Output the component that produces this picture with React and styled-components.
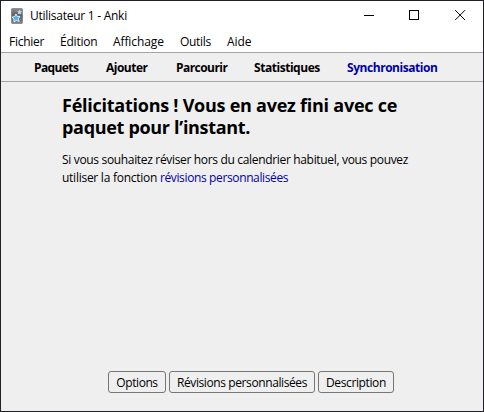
import React from "react";
import styled, { createGlobalStyle } from "styled-components";

const Global = createGlobalStyle`
  * { box-sizing: border-box; }
  body { margin: 0; background: #231f26; font-family: "Open Sans", "Noto Sans", sans-serif; font-size: 12px; color: #000; overflow: hidden; }
`;

const Window = styled.div`
  width: 484px;
  height: 412px;
  border: 1px solid #231f26;
  background: #efefef;
  display: flex;
  flex-direction: column;
`;

const TitleBar = styled.header`
  height: 30px;
  flex: none;
  background: #fff;
  display: flex;
  align-items: center;
  padding-left: 10px;
`;

const Title = styled.span`
  margin-left: 7px;
  line-height: 16px;
  letter-spacing: -0.26px;
  flex: 1;
`;

const Controls = styled.div`
  display: flex;
  height: 30px;
`;

const Control = styled.span`
  width: 46px;
  height: 30px;
  display: block;
`;

const MenuBar = styled.nav`
  height: 21px;
  flex: none;
  background: #fff;
  display: flex;
  padding-left: 8px;
  line-height: 22px;
`;

const MenuItem = styled.span`
  width: ${(p) => p.$width}px;
  letter-spacing: ${(p) => p.$track || 0}px;
  white-space: nowrap;
`;

const Toolbar = styled.nav`
  height: 30px;
  flex: none;
  border: solid #a5a5a5;
  border-width: 1px 0;
  display: flex;
  padding-left: 33px;
  line-height: 29px;
  font-weight: 700;
`;

const ToolLink = styled.a`
  width: ${(p) => p.$width}px;
  letter-spacing: ${(p) => p.$track || 0}px;
  color: ${(p) => (p.$accent ? "#0000a8" : "#000")};
  white-space: nowrap;
`;

const Content = styled.main`
  flex: 1;
  padding: 12px 0 0 61px;
`;

const Heading = styled.h1`
  margin: 0;
  font-size: 18px;
  line-height: 22px;
  font-weight: 700;
`;

const Message = styled.p`
  margin: 13px 0 0;
  line-height: 18px;
`;

const Line = styled.span`
  display: block;
  white-space: nowrap;
  letter-spacing: ${(p) => p.$track || 0}px;
`;

const Link = styled.a`
  color: #0000a8;
  letter-spacing: -0.37px;
`;

const Footer = styled.footer`
  display: flex;
  gap: 3px;
  padding: 0 0 18px 107px;
`;

const Button = styled.button`
  width: ${(p) => p.$width}px;
  height: 22px;
  padding: 1px 0 0;
  border: 1px solid #767676;
  border-radius: 3px;
  background: #efefef;
  color: #000;
  font: inherit;
  line-height: 19px;
  letter-spacing: ${(p) => p.$track || 0}px;
  white-space: nowrap;
`;

const AnkiIcon = () => (
  <svg width="12" height="16" viewBox="0 0 12 16">
    <defs>
      <linearGradient id="card" x1="0" y1="0" x2="0" y2="1">
        <stop offset="0" stopColor="#8c8c8c" />
        <stop offset="0.45" stopColor="#606060" />
        <stop offset="1" stopColor="#858585" />
      </linearGradient>
    </defs>
    <rect x="0.3" y="0.3" width="11.4" height="15.4" rx="1.6" fill="url(#card)" stroke="#777" strokeWidth="0.6" />
    <path d="M4.9 6 6.2 8.4 9 8.5 7.3 10.7 8.2 13.4 5.4 12.4 3 14 3 11.1 1 9.2 3.8 8.5Z" fill="#4fb0ee" stroke="#e8f5ff" strokeWidth="0.9" strokeLinejoin="round" />
    <path d="M8.7 2 9.3 3.4 10.8 3.6 9.8 4.7 10 6.1 8.7 5.5 7.4 6.1 7.6 4.7 6.6 3.5 8.1 3.3Z" fill="#a9dcfa" stroke="#d5edfb" strokeWidth="0.4" />
  </svg>
);

const glyphs = {
  minimize: <path d="M19 14.5H29" />,
  maximize: <rect x="18.5" y="9.5" width="9" height="9" />,
  close: <path d="M18.2 9.2 28 19M28 9.2 18.2 19" />,
};

const WindowControl = ({ name }) => (
  <Control>
    <svg width="46" height="30" fill="none" stroke="#000" strokeWidth="1">
      {glyphs[name]}
    </svg>
  </Control>
);

export default function App() {
  return (
    <>
      <Global />
      <Window>
        <TitleBar>
          <AnkiIcon />
          <Title>Utilisateur 1 - Anki</Title>
          <Controls>
            <WindowControl name="minimize" />
            <WindowControl name="maximize" />
            <WindowControl name="close" />
          </Controls>
        </TitleBar>
        <MenuBar>
          <MenuItem $width={51} $track={-0.25}>Fichier</MenuItem>
          <MenuItem $width={53} $track={-0.22}>Édition</MenuItem>
          <MenuItem $width={67} $track={-0.1}>Affichage</MenuItem>
          <MenuItem $width={47} $track={-0.3}>Outils</MenuItem>
          <MenuItem $width={40} $track={-0.1}>Aide</MenuItem>
        </MenuBar>
        <Toolbar>
          <ToolLink $width={72} $track={-0.6}>Paquets</ToolLink>
          <ToolLink $width={70} $track={-0.5}>Ajouter</ToolLink>
          <ToolLink $width={78} $track={-0.55}>Parcourir</ToolLink>
          <ToolLink $width={93} $track={-0.46}>Statistiques</ToolLink>
          <ToolLink $width={92} $track={-0.45} $accent>Synchronisation</ToolLink>
        </Toolbar>
        <Content>
          <Heading>
            <Line $track={-0.25}>Félicitations ! Vous en avez fini avec ce</Line>
            <Line $track={-0.31}>paquet pour l’instant.</Line>
          </Heading>
          <Message>
            <Line $track={-0.33}>Si vous souhaitez réviser hors du calendrier habituel, vous pouvez</Line>
            <Line $track={-0.26}>
              utiliser la fonction <Link>révisions personnalisées</Link>
            </Line>
          </Message>
        </Content>
        <Footer>
          <Button $width={58} $track={-0.42}>Options</Button>
          <Button $width={146} $track={-0.4}>Révisions personnalisées</Button>
          <Button $width={76} $track={-0.38}>Description</Button>
        </Footer>
      </Window>
    </>
  );
}
